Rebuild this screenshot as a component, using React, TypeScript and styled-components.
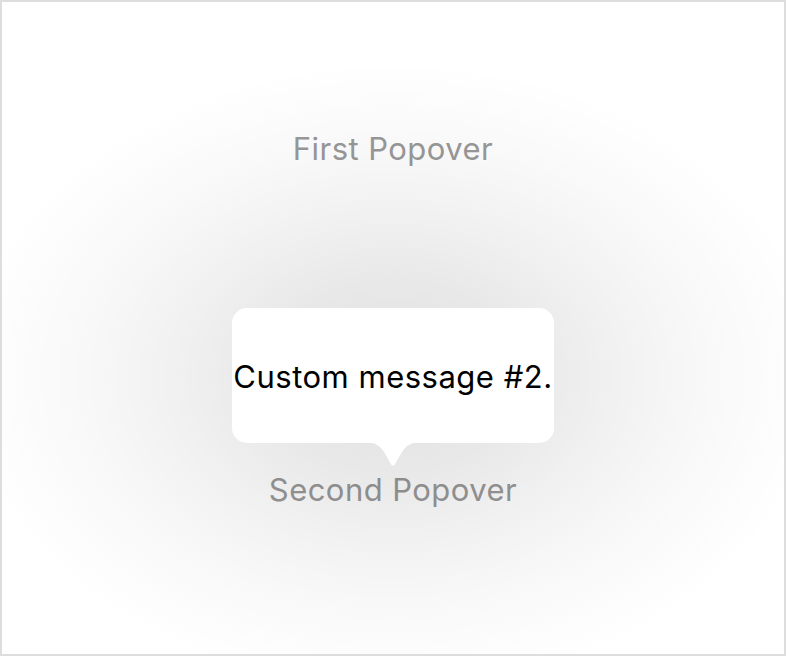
import React from "react";
import styled, { createGlobalStyle } from "styled-components";

const Global = createGlobalStyle`
  html, body { margin: 0; padding: 0; background: #fff; }
  body { font-family: Inter, "Noto Sans", "Liberation Sans", sans-serif; }
`;

const Frame = styled.div`
  box-sizing: border-box;
  width: 786px;
  height: 656px;
  border: 2px solid #dddddd;
  background: #ffffff;
  display: flex;
  flex-direction: column;
  align-items: center;
  overflow: hidden;
`;

const Trigger = styled.div<{ $top: number }>`
  position: relative;
  margin-top: ${(p) => p.$top}px;
  font-size: 31px;
  line-height: 36px;
  color: #999999;
  letter-spacing: 0.45px;
  white-space: nowrap;
`;

const Popover = styled.div`
  position: absolute;
  left: 50%;
  bottom: calc(100% + 4px);
  transform: translateX(-50%);
  width: 322px;
  display: flex;
  flex-direction: column;
  align-items: center;
  z-index: 2;

  &::before {
    content: "";
    position: absolute;
    left: 50%;
    top: 68px;
    width: 900px;
    height: 660px;
    transform: translate(-50%, -50%);
    background: radial-gradient(
      ellipse 430px 315px at center,
      rgba(0, 0, 0, 0.12) 0%,
      rgba(0, 0, 0, 0.09) 30%,
      rgba(0, 0, 0, 0.055) 52%,
      rgba(0, 0, 0, 0.028) 72%,
      rgba(0, 0, 0, 0.01) 88%,
      rgba(0, 0, 0, 0) 100%
    );
    z-index: -1;
    pointer-events: none;
  }
`;

const Bubble = styled.div`
  width: 100%;
  height: 135px;
  box-sizing: border-box;
  padding-top: 2px;
  background: #ffffff;
  border-radius: 15px;
  display: flex;
  align-items: center;
  justify-content: center;
  font-size: 31px;
  line-height: 36px;
  color: #000;
  letter-spacing: 0.5px;
  white-space: nowrap;
`;

const Arrow = styled.svg`
  display: block;
  width: 60px;
  height: 26px;
  margin-top: -1px;
`;

export default function App() {
  return (
    <>
      <Global />
      <Frame>
        <Trigger $top={129}>First Popover</Trigger>
        <Trigger $top={305}>
          Second Popover
          <Popover>
            <Bubble>Custom message #2.</Bubble>
            <Arrow viewBox="0 0 60 26">
              <path
                d="M0 0 C12 0 16 3 21 10 L27.5 21.5 Q30 26 32.5 21.5 L39 10 C44 3 48 0 60 0 Z"
                fill="#ffffff"
              />
            </Arrow>
          </Popover>
        </Trigger>
      </Frame>
    </>
  );
}
